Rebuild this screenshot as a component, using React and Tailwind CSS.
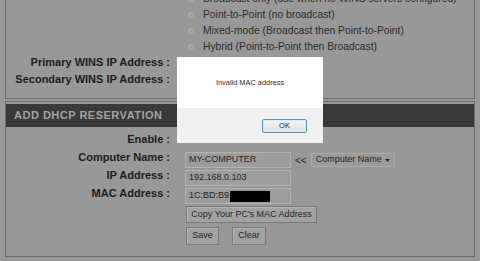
import React from "react";

function RadioRow({ children }) {
  return (
    <div className="flex h-[16px] items-center">
      <div className="w-[164px] shrink-0" />
      <span className="ml-[18px] inline-block h-[6px] w-[6px] shrink-0 rounded-full border border-[#b0b0b0] bg-[#a3a3a3]" />
      <span className="ml-[9px] whitespace-nowrap text-[10.3px] text-[#2c2c2c]">{children}</span>
    </div>
  );
}

function Label({ children, className = "" }) {
  return (
    <div className={"w-[164px] shrink-0 whitespace-nowrap text-right text-[11px] font-bold leading-none text-[#1c1c1c] " + className}>
      {children}
    </div>
  );
}

function Input({ children }) {
  return (
    <div className="ml-[15px] flex h-[16px] w-[106px] items-center border border-[#b2b2b2] bg-[#9d9d9d] pl-[3px] text-[9px] text-[#262626]">
      {children}
    </div>
  );
}

function Btn({ children, className = "" }) {
  return (
    <div className={"flex items-center justify-center border border-[#7a7a7a] bg-[#a2a2a2] text-[9px] text-[#262626] shadow-[inset_1px_1px_0_#b4b4b4] " + className}>
      {children}
    </div>
  );
}

export default function App() {
  return (
    <div className="relative h-[261px] w-[480px] overflow-hidden bg-[#989898] font-['Liberation_Sans',Arial,sans-serif]">
      {/* Top panel (cut off at top) */}
      <div className="mx-[5px] -mt-[9px] border-x border-b border-[#6c6c6c] pb-[9px]">
        <RadioRow>Broadcast only (use when no WINS servers configured)</RadioRow>
        <RadioRow>Point-to-Point (no broadcast)</RadioRow>
        <RadioRow>Mixed-mode (Broadcast then Point-to-Point)</RadioRow>
        <RadioRow>Hybrid (Point-to-Point then Broadcast)</RadioRow>
        <div className="flex h-[17px] items-center">
          <Label className="pb-[3px]">Primary WINS IP Address :</Label>
        </div>
        <div className="flex h-[17px] items-center">
          <Label className="pb-[2px]">Secondary WINS IP Address :</Label>
        </div>
      </div>

      {/* Add DHCP reservation panel */}
      <div className="mx-[5px] mt-[2px] h-[156px] border border-[#6c6c6c] pt-[2px]">
        <div className="flex h-[23px] items-center bg-[#393939] pl-[8px] text-[11px] font-bold tracking-[0.5px] text-[#a3a3a3]">
          ADD DHCP RESERVATION
        </div>
        <div className="flex h-[24px] items-center">
          <Label>Enable :</Label>
        </div>
        <div className="flex h-[18px] items-center">
          <Label className="pb-[5px]">Computer Name :</Label>
          <Input>MY-COMPUTER</Input>
          <span className="ml-[4px] text-[10px] text-[#262626]">&lt;&lt;</span>
          <div className="ml-[4px] flex h-[14px] w-[84px] items-center border border-[#aaaaaa] bg-[#9b9b9b] pl-[4px] text-[9px] text-[#262626]">
            <span>Computer Name</span>
            <svg width="5" height="3" viewBox="0 0 5 3" className="ml-auto mr-[4px]">
              <path d="M0 0h5L2.5 3z" fill="#2e2e2e" />
            </svg>
          </div>
        </div>
        <div className="flex h-[18px] items-center">
          <Label className="pb-[5px]">IP Address :</Label>
          <Input>192.168.0.103</Input>
        </div>
        <div className="flex h-[18px] items-center">
          <Label className="pb-[5px]">MAC Address :</Label>
          <Input>
            <span>1C:BD:B9</span>
            <span className="ml-[1px] inline-block h-[11px] w-[40px] bg-black" />
          </Input>
        </div>
        <div className="flex pt-[1px]">
          <div className="w-[164px] shrink-0" />
          <Btn className="ml-[16px] h-[17px] w-[131px]">Copy Your PC&apos;s MAC Address</Btn>
        </div>
        <div className="mt-[4px] flex">
          <div className="w-[164px] shrink-0" />
          <Btn className="ml-[16px] h-[18px] w-[33px]">Save</Btn>
          <Btn className="ml-[13px] h-[18px] w-[34px]">Clear</Btn>
        </div>
      </div>

      {/* Alert dialog overlay */}
      <div className="absolute left-[177px] top-[57px] flex w-[146px] flex-col bg-white">
        <div className="flex h-[51px] items-center justify-center text-[7.4px] text-[#2a2a2a]">
          Invalid MAC address
        </div>
        <div className="flex h-[35px] items-start justify-end bg-[#f0f0f0] pr-[16px] pt-[11px]">
          <div className="flex h-[14px] w-[45px] items-center justify-center rounded-[2px] border border-[#5b93bf] bg-gradient-to-b from-[#f4f4f4] to-[#e2e2e2] text-[7.5px] text-[#1e1e1e] shadow-[inset_0_0_0_1px_#d6ecf9]">
            OK
          </div>
        </div>
      </div>
    </div>
  );
}
